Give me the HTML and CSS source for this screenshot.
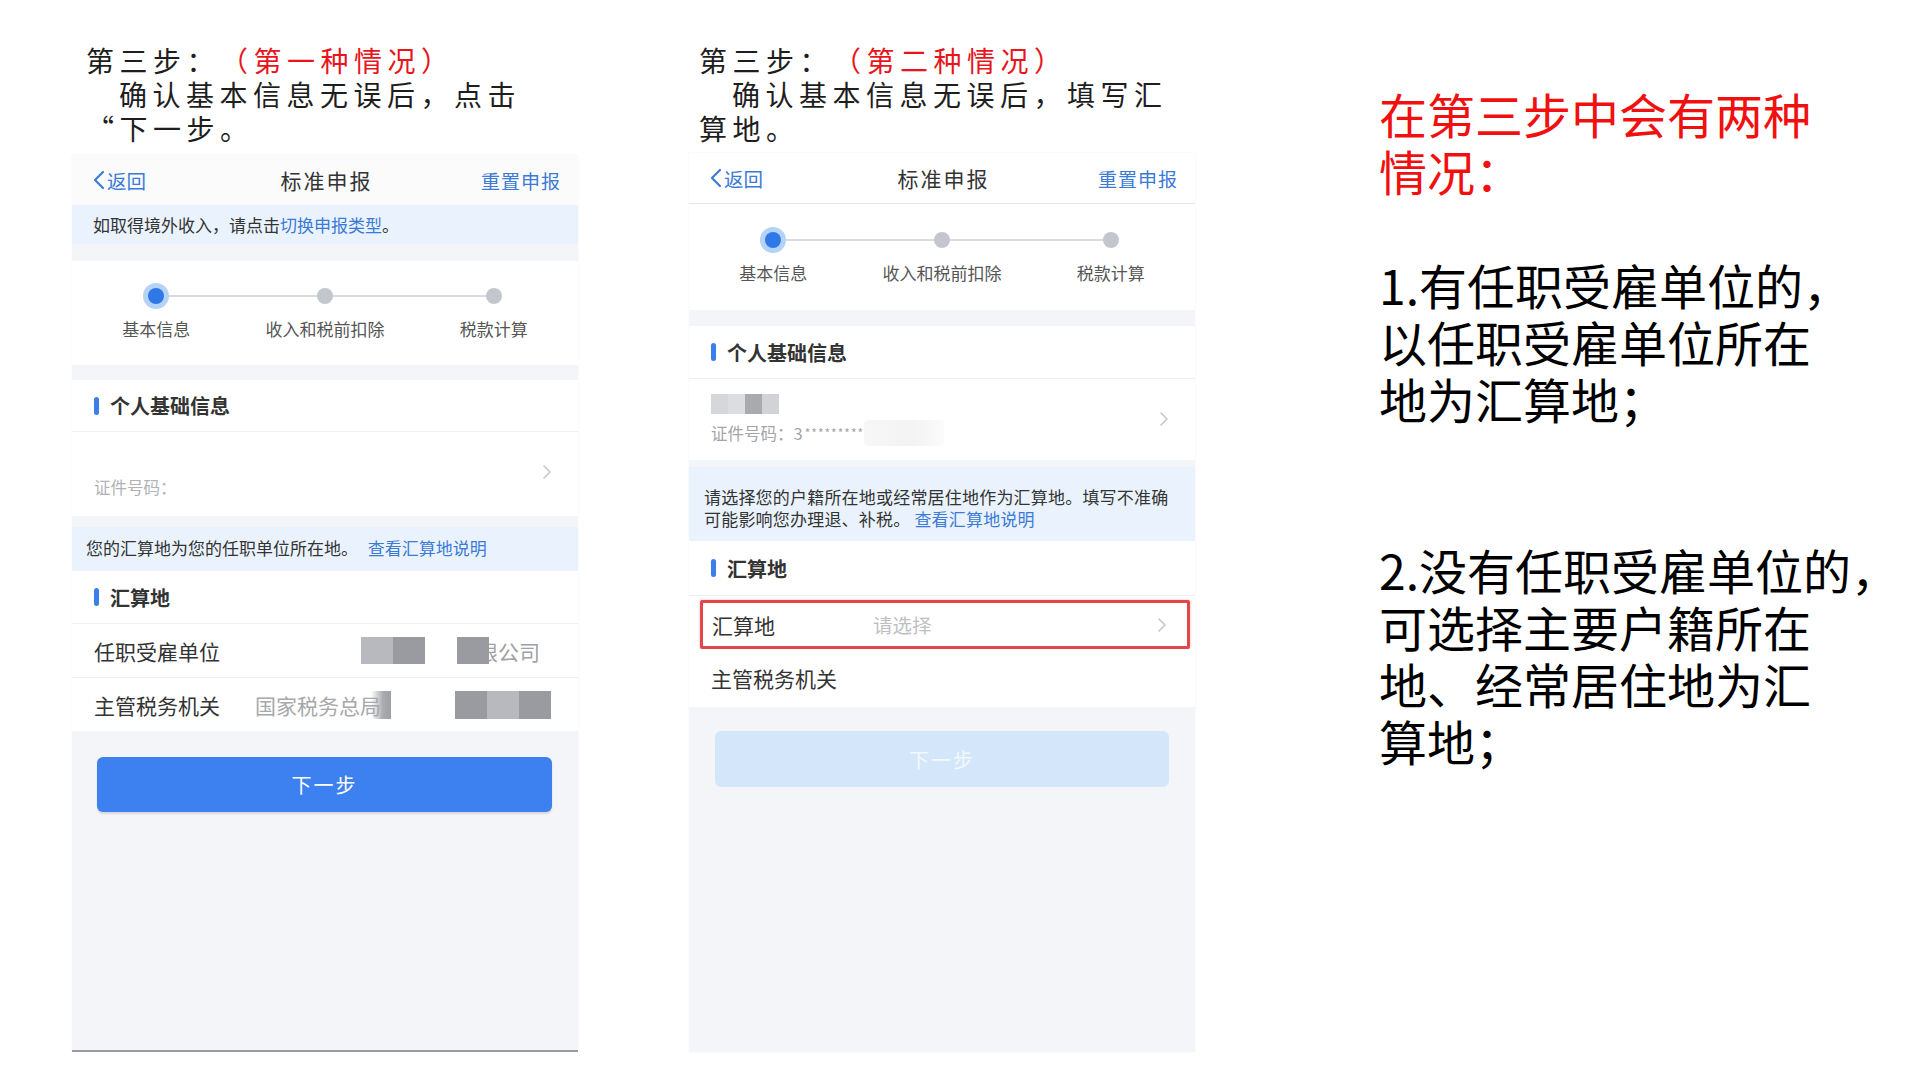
FILE: index.html
```html
<!DOCTYPE html>
<html lang="zh-CN">
<head>
<meta charset="UTF-8">
<meta name="viewport" content="width=device-width, initial-scale=1.0">
<title>第三步：确认基本信息</title>
<link rel="stylesheet" href="styles.css">
</head>
<body>
<div class="slide">

    <!-- 第一种情况 -->
    <div class="column">
        <div class="caption caption-one">
            <div>第三步：<span class="red">（第一种情况）</span></div>
            <div class="indent">确认基本信息无误后，点击</div>
            <div>“下一步。</div>
        </div>

        <div class="phone phone-one">
            <div class="nav nav-faded">
                <a class="back">
                    <svg width="14" height="20" viewBox="0 0 14 20"><polyline points="11,2 3,10 11,18" fill="none" stroke="#3b7ad6" stroke-width="2.2" stroke-linecap="round" stroke-linejoin="round"/></svg>
                    返回
                </a>
                <div class="nav-title">标准申报</div>
                <a class="reset">重置申报</a>
            </div>

            <div class="notice notice-top">如取得境外收入，请点击<span class="link">切换申报类型</span>。</div>

            <div class="steps steps-one">
                <div class="step">
                    <span class="dot dot-active"></span>
                    <span class="step-label">基本信息</span>
                </div>
                <div class="step">
                    <span class="dot"></span>
                    <span class="step-label">收入和税前扣除</span>
                </div>
                <div class="step">
                    <span class="dot"></span>
                    <span class="step-label">税款计算</span>
                </div>
            </div>

            <div class="section-head head-personal-one"><span class="bar"></span>个人基础信息</div>
            <div class="id-row id-row-one">
                <div class="id-text">
                    <div class="name-blank"></div>
                    <div class="id-number">证件号码：</div>
                </div>
                <svg class="chevron" width="10" height="16" viewBox="0 0 10 16"><polyline points="2,2 8,8 2,14" fill="none" stroke="#c4c6cc" stroke-width="1.6" stroke-linecap="round" stroke-linejoin="round"/></svg>
            </div>

            <div class="notice notice-place-one">您的汇算地为您的任职单位所在地。 <span class="link">查看汇算地说明</span></div>

            <div class="section-head head-place-one"><span class="bar"></span>汇算地</div>
            <div class="form-row row-employer">
                <span class="row-label">任职受雇单位</span>
                <span class="row-value">
                    <span class="mosaic mosaic-a"><i class="px light"></i><i class="px dark"></i></span>
                    <span class="mosaic mosaic-b"><i class="px dark"></i></span>
                    <span class="company">限公司</span>
                </span>
            </div>
            <div class="form-row row-office">
                <span class="row-label">主管税务机关</span>
                <span class="row-value">
                    <span class="office-name">国家税务总局</span><span class="smear"></span>
                    <span class="mosaic mosaic-c"><i class="px dark"></i><i class="px light"></i><i class="px dark"></i></span>
                </span>
            </div>

            <button class="next-button next-one">下一步</button>
        </div>
    </div>

    <!-- 第二种情况 -->
    <div class="column">
        <div class="caption caption-two">
            <div>第三步：<span class="red">（第二种情况）</span></div>
            <div class="indent">确认基本信息无误后，填写汇</div>
            <div>算地。</div>
        </div>

        <div class="phone phone-two">
            <div class="nav nav-line">
                <a class="back">
                    <svg width="14" height="20" viewBox="0 0 14 20"><polyline points="11,2 3,10 11,18" fill="none" stroke="#3b7ad6" stroke-width="2.2" stroke-linecap="round" stroke-linejoin="round"/></svg>
                    返回
                </a>
                <div class="nav-title">标准申报</div>
                <a class="reset">重置申报</a>
            </div>

            <div class="steps steps-two">
                <div class="step">
                    <span class="dot dot-active"></span>
                    <span class="step-label">基本信息</span>
                </div>
                <div class="step">
                    <span class="dot"></span>
                    <span class="step-label">收入和税前扣除</span>
                </div>
                <div class="step">
                    <span class="dot"></span>
                    <span class="step-label">税款计算</span>
                </div>
            </div>

            <div class="section-head head-personal-two"><span class="bar"></span>个人基础信息</div>
            <div class="id-row id-row-two">
                <div class="id-text">
                    <div class="name-mosaic"><i class="m1"></i><i class="m2"></i><i class="m3"></i><i class="m4"></i></div>
                    <div class="id-number">证件号码：3<span class="stars">*********</span><span class="fog"></span></div>
                </div>
                <svg class="chevron" width="10" height="16" viewBox="0 0 10 16"><polyline points="2,2 8,8 2,14" fill="none" stroke="#c4c6cc" stroke-width="1.6" stroke-linecap="round" stroke-linejoin="round"/></svg>
            </div>

            <div class="notice notice-place-two">请选择您的户籍所在地或经常居住地作为汇算地。填写不准确<br>可能影响您办理退、补税。 <span class="link">查看汇算地说明</span></div>

            <div class="section-head head-place-two"><span class="bar"></span>汇算地</div>
            <div class="place-group">
                <div class="form-row row-pick">
                    <span class="row-label">汇算地</span>
                    <span class="row-value placeholder">请选择</span>
                    <svg class="chevron" width="10" height="16" viewBox="0 0 10 16"><polyline points="2,2 8,8 2,14" fill="none" stroke="#c4c6cc" stroke-width="1.6" stroke-linecap="round" stroke-linejoin="round"/></svg>
                </div>
                <div class="form-row row-office-two">
                    <span class="row-label">主管税务机关</span>
                </div>
            </div>

            <button class="next-button next-two">下一步</button>
        </div>
    </div>

    <!-- 说明 -->
    <div class="explain">
        <p class="explain-title">在第三步中会有两种<br>情况：</p>
        <p class="explain-item item-one">1.有任职受雇单位的，<br>以任职受雇单位所在<br>地为汇算地；</p>
        <p class="explain-item item-two">2.没有任职受雇单位的，<br>可选择主要户籍所在<br>地、经常居住地为汇<br>算地；</p>
    </div>

</div>
</body>
</html>
```

FILE: styles.css
```css
body {
    margin: 0;
    background-color: #FFFFFF;
    font-family: "Noto Sans CJK SC", "Noto Sans", sans-serif;
    color: #333333;
}
.slide {
    display: flex;
    width: 1920px;
    height: 1080px;
    padding-left: 72px;
    box-sizing: border-box;
    overflow: hidden;
}
.column {
    display: flex;
    flex-direction: column;
    flex-shrink: 0;
    width: 506px;
    padding-top: 43px;
}
.column + .column {
    margin-left: 111px;
}

/* caption above each phone */
.caption {
    font-size: 28px;
    line-height: 34px;
    letter-spacing: 5.5px;
    color: #1E1E1E;
    white-space: nowrap;
}
.caption-one {
    padding-left: 14px;
}
.caption-two {
    padding-left: 10px;
}
.caption .red {
    margin-left: 14px;
    color: #E8161C;
}
.caption .indent {
    padding-left: 33px;
}

/* phone screen */
.phone {
    display: flex;
    flex-direction: column;
    background-color: #F4F5F9;
    box-shadow: 0 0 2px rgba(0, 0, 0, 0.06);
}
.phone-one {
    margin-top: 10px;
    height: 897px;
    border-bottom: 2px solid #9A9A9A;
    box-sizing: border-box;
}
.phone-two {
    margin-top: 8px;
    height: 899px;
}
.nav {
    display: grid;
    grid-template-columns: 1fr auto 1fr;
    align-items: center;
    height: 50px;
    padding: 0 17px 0 20px;
    background-color: #FFFFFF;
}
.nav-faded {
    background-color: #FBFBFC;
}
.nav-line {
    border-bottom: 1px solid #E6E7EB;
}
.back {
    display: flex;
    align-items: center;
    gap: 1px;
    font-size: 19.5px;
    color: #3B7AD6;
}
.nav-title {
    font-size: 21px;
    letter-spacing: 2px;
    color: #333333;
}
.reset {
    justify-self: end;
    font-size: 19px;
    letter-spacing: 1px;
    color: #3B7AD6;
}
.link {
    color: #3B7AD6;
}

/* blue notices */
.notice {
    background-color: #EAF3FD;
    font-size: 17px;
    color: #333333;
    white-space: nowrap;
}
.notice-top {
    height: 39px;
    line-height: 39px;
    padding-left: 21px;
    margin-bottom: 17px;
}
.notice-place-one {
    height: 44px;
    line-height: 42px;
    padding-left: 14px;
    margin-top: 11px;
}
.notice-place-one .link {
    margin-left: 6px;
}
.notice-place-two {
    padding: 19px 0 11px 15px;
    line-height: 22px;
    letter-spacing: 0.2px;
    margin-top: 7px;
}

/* progress steps */
.steps {
    position: relative;
    display: grid;
    grid-template-columns: repeat(3, 1fr);
    background-color: #FFFFFF;
}
.steps::before {
    content: "";
    position: absolute;
    left: 16.7%;
    right: 16.7%;
    height: 2px;
    background-color: #D9DBE0;
}
.steps-one {
    height: 104px;
    padding-top: 22px;
    box-sizing: border-box;
}
.steps-one::before {
    top: 34px;
}
.steps-two {
    height: 106px;
    padding-top: 23px;
    box-sizing: border-box;
}
.steps-two::before {
    top: 35px;
}
.step {
    position: relative;
    display: flex;
    flex-direction: column;
    align-items: center;
}
.dot {
    width: 16px;
    height: 16px;
    margin: 5px 0;
    border-radius: 50%;
    background-color: #C3C6CD;
}
.dot-active {
    background-color: #2F78E8;
    box-shadow: 0 0 0 5px #B5D2F7;
}
.step-label {
    margin-top: 8px;
    font-size: 17px;
    line-height: 24px;
    color: #555555;
}

/* section headers */
.section-head {
    display: flex;
    align-items: center;
    gap: 11px;
    padding-left: 22px;
    background-color: #FFFFFF;
    font-size: 20px;
    font-weight: 700;
    color: #333333;
    border-bottom: 1px solid #EEEFF2;
}
.head-personal-one {
    margin-top: 15px;
    height: 51px;
}
.head-personal-two {
    margin-top: 16px;
    height: 52px;
}
.head-place-one {
    height: 52px;
}
.head-place-two {
    height: 54px;
}
.bar {
    width: 5px;
    height: 18px;
    border-radius: 3px;
    background-color: #3C7FE8;
}

/* id rows */
.id-row {
    display: flex;
    align-items: center;
    justify-content: space-between;
    padding: 0 26px 0 22px;
    background-color: #FFFFFF;
}
.id-row-one {
    height: 84px;
}
.id-row-two {
    height: 81px;
}
.id-row-one .chevron {
    margin-top: -4px;
}
.id-row-two .chevron {
    margin-top: -2px;
}
.id-number {
    display: flex;
    align-items: center;
    font-size: 16.5px;
    line-height: 24px;
    color: #A3A5AA;
}
.name-blank {
    height: 26px;
}
.id-row-one .id-number {
    margin-top: 0;
    color: #B0B2B6;
}
.name-mosaic {
    display: flex;
    height: 20px;
    margin-bottom: 6px;
}
.name-mosaic i {
    width: 17px;
    height: 20px;
}
.name-mosaic .m1 { background-color: #D6D7DA; }
.name-mosaic .m2 { background-color: #DCDDE0; }
.name-mosaic .m3 { background-color: #A9AAAE; }
.name-mosaic .m4 { background-color: #D2D3D6; }
.stars {
    font-size: 12px;
    letter-spacing: 1px;
    margin-left: 2px;
}
.fog {
    width: 80px;
    height: 26px;
    background: linear-gradient(90deg, #F7F7F8, #F3F3F4 60%, #FBFBFB);
    border-radius: 4px;
}

/* form rows */
.form-row {
    display: flex;
    align-items: center;
    background-color: #FFFFFF;
    font-size: 21px;
    color: #333333;
    white-space: nowrap;
}
.row-label {
    width: 161px;
    flex-shrink: 0;
}
.row-employer {
    height: 53px;
    padding-left: 22px;
}
.row-office {
    height: 53px;
    padding-left: 22px;
    border-top: 1px solid #EEEFF2;
}
.row-value {
    display: flex;
    align-items: center;
    color: #9C9EA3;
}
.mosaic {
    position: relative;
    z-index: 1;
    display: flex;
}
.px {
    display: block;
    width: 32px;
    height: 27px;
}
.px.light {
    background-color: #B8B9BE;
}
.px.dark {
    background-color: #9A9BA0;
}
.row-employer .row-value {
    padding-left: 106px;
}
.mosaic-b {
    margin-left: 32px;
}
/* the first char sits partly under the mosaic square */
.company {
    margin-left: -12px;
    color: #A0A2A6;
}
.row-office .mosaic {
    margin-left: 64px;
}
.mosaic-c .px {
    height: 28px;
}
.office-name {
    color: #A6A8AC;
}
.smear {
    width: 20px;
    height: 28px;
    margin-left: -10px;
    background: linear-gradient(90deg, rgba(180, 181, 186, 0), #A9AAAF 60%, #9FA0A5);
}
.place-group {
    background-color: #FFFFFF;
    padding-top: 4px;
}
.row-pick {
    height: 43px;
    margin: 0 5px 0 11px;
    padding: 0 20px 0 9px;
    border: 3px solid #E2474A;
    border-radius: 2px;
    box-shadow: 0 0 3px rgba(226, 71, 74, 0.35);
}
.row-pick .row-value {
    flex: 1;
}
.placeholder {
    color: #BDBFC3;
    font-size: 19.5px;
}
.row-office-two {
    height: 58px;
    padding-left: 22px;
}

/* next buttons */
.next-button {
    display: flex;
    align-items: center;
    justify-content: center;
    border: none;
    border-radius: 6px;
    font-family: "Noto Sans CJK SC", sans-serif;
    font-size: 20px;
    letter-spacing: 2px;
    color: #FFFFFF;
}
.next-one {
    height: 55px;
    margin: 26px 26px 0 25px;
    background-color: #3D80EF;
    box-shadow: 0 2px 2px rgba(0, 0, 0, 0.12);
}
.next-two {
    height: 56px;
    margin: 24px 26px 0 26px;
    background-color: #D4E6FA;
    color: #F3F8FE;
}

/* explanation on the right */
.explain {
    flex-shrink: 0;
    margin-left: 184px;
    padding-top: 85px;
    font-size: 48px;
    line-height: 57px;
    color: #000000;
    white-space: nowrap;
}
.explain p {
    margin: 0;
}
.explain-title {
    color: #F01010;
}
.explain .item-one {
    margin-top: 57px;
}
.explain .item-two {
    margin-top: 114px;
}
```
